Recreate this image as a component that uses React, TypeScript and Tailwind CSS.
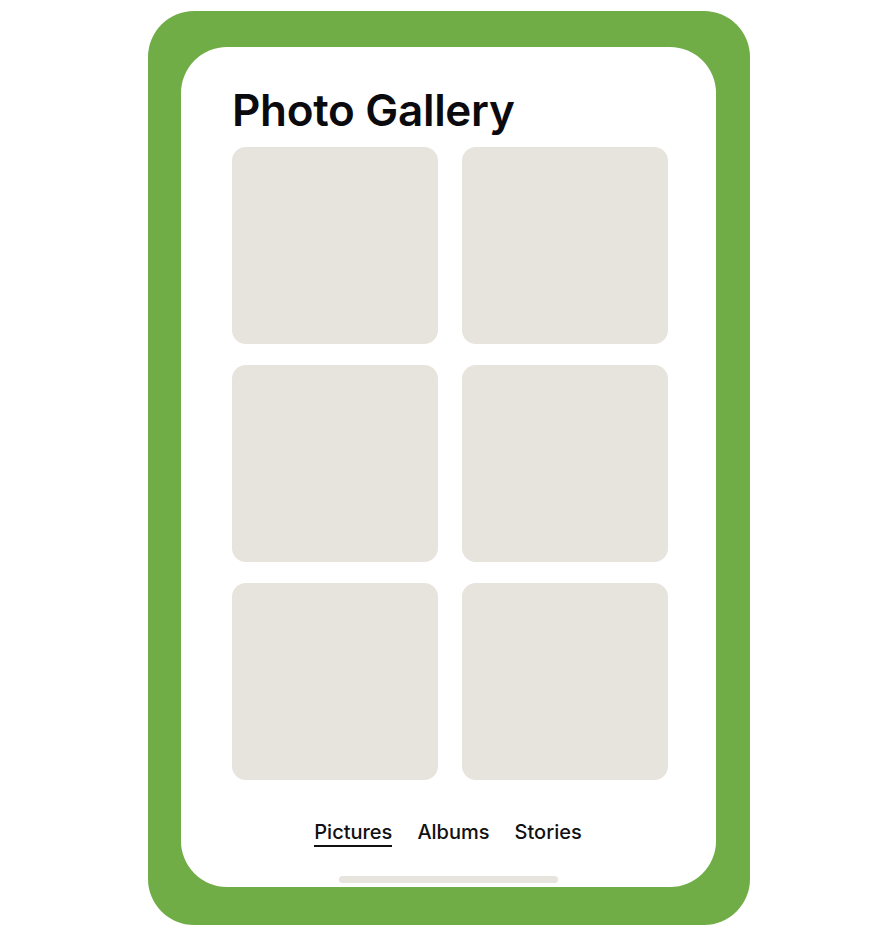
const tabs = ["Pictures", "Albums", "Stories"];

export default function App() {
  return (
    <div className="min-h-screen bg-white pt-[11px] pl-[148px]" style={{ fontFamily: "Inter, 'Noto Sans', sans-serif" }}>
      <div className="w-[602px] h-[914px] bg-[#70ad47] rounded-[46px] pt-[36px] pl-[33px]">
        <div className="w-[535px] h-[840px] bg-white rounded-[46px] flex flex-col pl-[51px] pr-[48px]">
          <h1 className="mt-[30px] text-[44px] leading-[66px] font-semibold tracking-[-0.3px] text-[#0b0b0f]">Photo Gallery</h1>
          <div className="mt-[4px] grid grid-cols-2 gap-x-[24px] gap-y-[21px]">
            {Array.from({ length: 6 }).map((_, i) => (
              <div key={i} className="h-[197px] rounded-[14px] bg-[#e7e3dd]" />
            ))}
          </div>
          <div className="mt-[39px] -ml-[4px] flex justify-center gap-[25px] text-[20px] font-medium text-[#111]">
            {tabs.map((t, i) => (
              <span key={t} className={i === 0 ? "border-b-2 border-[#111] leading-[26px]" : "leading-[26px]"}>
                {t}
              </span>
            ))}
          </div>
          <div className="mt-[29px] self-center -ml-[3px] w-[219px] h-[7px] rounded-full bg-[#e7e3dd]" />
        </div>
      </div>
    </div>
  );
}
